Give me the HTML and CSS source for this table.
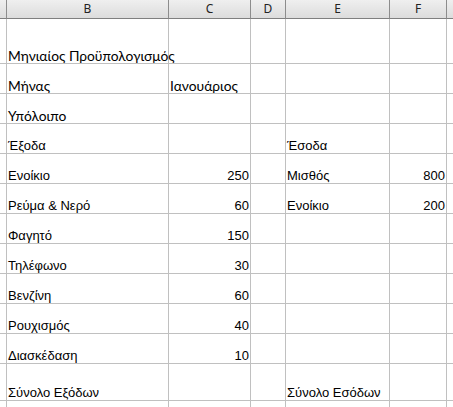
FILE: index.html
```html
<!DOCTYPE html>
<html>
<head>
<meta charset="utf-8">
<link rel="stylesheet" href="styles.css">
</head>
<body>
<div class="sheet">
  <div class="hd"></div><div class="hd">B</div><div class="hd">C</div><div class="hd">D</div><div class="hd">E</div><div class="hd">F</div><div class="hd last"></div>

  <div class="c r1"></div><div class="c r1 cal">Μηνιαίος Προϋπολογισμός</div><div class="c r1"></div><div class="c r1"></div><div class="c r1"></div><div class="c r1"></div><div class="c r1 last"></div>

  <div class="c"></div><div class="c cal">Μήνας</div><div class="c cal">Ιανουάριος</div><div class="c"></div><div class="c"></div><div class="c"></div><div class="c last"></div>

  <div class="c"></div><div class="c cal">Υπόλοιπο</div><div class="c"></div><div class="c"></div><div class="c"></div><div class="c"></div><div class="c last"></div>

  <div class="c"></div><div class="c">Έξοδα</div><div class="c"></div><div class="c"></div><div class="c">Έσοδα</div><div class="c"></div><div class="c last"></div>

  <div class="c"></div><div class="c">Ενοίκιο</div><div class="c num">250</div><div class="c"></div><div class="c">Μισθός</div><div class="c num">800</div><div class="c last"></div>

  <div class="c"></div><div class="c">Ρεύμα &amp; Νερό</div><div class="c num">60</div><div class="c"></div><div class="c">Ενοίκιο</div><div class="c num">200</div><div class="c last"></div>

  <div class="c"></div><div class="c">Φαγητό</div><div class="c num">150</div><div class="c"></div><div class="c"></div><div class="c"></div><div class="c last"></div>

  <div class="c"></div><div class="c">Τηλέφωνο</div><div class="c num">30</div><div class="c"></div><div class="c"></div><div class="c"></div><div class="c last"></div>

  <div class="c"></div><div class="c">Βενζίνη</div><div class="c num">60</div><div class="c"></div><div class="c"></div><div class="c"></div><div class="c last"></div>

  <div class="c"></div><div class="c">Ρουχισμός</div><div class="c num">40</div><div class="c"></div><div class="c"></div><div class="c"></div><div class="c last"></div>

  <div class="c"></div><div class="c">Διασκέδαση</div><div class="c num">10</div><div class="c"></div><div class="c"></div><div class="c"></div><div class="c last"></div>

  <div class="c r12"></div><div class="c r12">Σύνολο Εξόδων</div><div class="c r12"></div><div class="c r12"></div><div class="c r12">Σύνολο Εσόδων</div><div class="c r12"></div><div class="c r12 last"></div>

  <div class="c"></div><div class="c"></div><div class="c"></div><div class="c"></div><div class="c"></div><div class="c"></div><div class="c last"></div>
</div>
</body>
</html>
```
FILE: styles.css
```css
html, body {
  margin: 0;
  padding: 0;
  background: #ffffff;
  overflow: hidden;
}
.sheet {
  display: grid;
  grid-template-columns: 7px 162px 82px 35px 104px 57px 20px;
  grid-template-rows: 19px 45px repeat(10, 30px) 37px 30px;
  width: 453px;
  height: 407px;
  overflow: hidden;
  font-family: "Liberation Sans", Arial, sans-serif;
  font-size: 13px;
  color: #000000;
}
.hd {
  background: linear-gradient(#efefef, #dcdcdc);
  border-right: 1px solid #8c8c8c;
  border-bottom: 1px solid #7f7f7f;
  font-family: "Noto Sans", "Open Sans", sans-serif;
  font-size: 12px;
  color: #222222;
  display: flex;
  align-items: center;
  justify-content: center;
  line-height: 1;
}
.c {
  border-right: 1px solid #c0c0c0;
  border-bottom: 1px solid #c0c0c0;
  display: flex;
  align-items: flex-end;
  padding: 0 1px 0 1px;
  white-space: nowrap;
  line-height: 15px;
  overflow: visible;
}
.cal {
  font-family: Lato, "Open Sans", sans-serif;
  font-size: 13.8px;
}
.num {
  justify-content: flex-end;
}
.last {
  border-right: none;
}
```
